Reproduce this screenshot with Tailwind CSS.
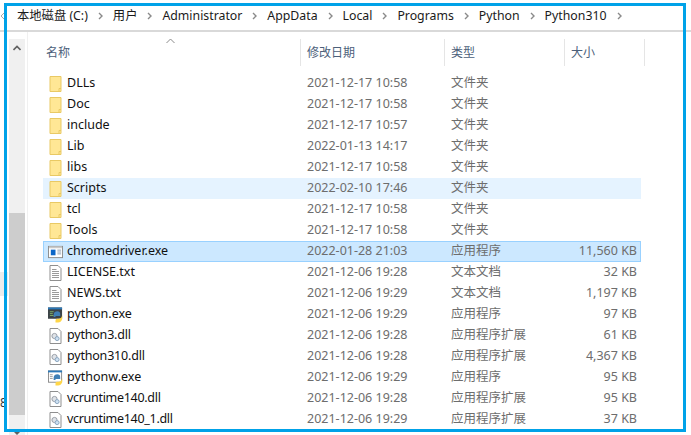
<!DOCTYPE html>
<html lang="zh-CN">
<head>
    <meta charset="UTF-8">
    <title>Python310</title>
    <script src="https://cdn.jsdelivr.net/npm/@tailwindcss/browser@4"></script>
</head>
<body class="bg-white">
    <svg width="0" height="0" class="absolute">
        <symbol id="folder" viewBox="0 0 14 16">
            <path d="M1.5 .5H12.5V15.5H1.5Z" fill="#ffe795" stroke="#e9c964"/>
            <path d="M10.5 15V12.5H12.5" fill="none" stroke="#e9c964"/>
        </symbol>
        <symbol id="txt" viewBox="0 0 14 16">
            <path d="M1.5 .5H9.5L12.5 3.5V15.5H1.5Z" fill="#fff" stroke="#8f8f8f"/>
            <path d="M3.5 4.5H8M3.5 6.5H10.5M3.5 8.5H10.5M3.5 10.5H10.5M3.5 12.5H10.5" stroke="#9a9a9a"/>
        </symbol>
        <symbol id="dll" viewBox="0 0 14 16">
            <path d="M1.5 .5H9.5L12.5 3.5V15.5H1.5Z" fill="#fff" stroke="#8f8f8f"/>
            <circle cx="6" cy="8" r="2.6" fill="#dfe3e8" stroke="#9aa0a8"/>
            <circle cx="8.6" cy="10.6" r="2" fill="#cfe2f3" stroke="#8ba6c0"/>
        </symbol>
        <symbol id="exe" viewBox="0 0 16 13">
            <rect x=".5" y=".5" width="15" height="12" fill="#fff" stroke="#8a8a8a"/>
            <path d="M1 1.5H15" stroke="#c9c9c9" stroke-width="2"/>
            <rect x="3" y="4" width="5" height="6" fill="#0a66c8"/>
            <path d="M10 4.5H14M10 6.5H14M10 8.5H14" stroke="#8a9cb0"/>
        </symbol>
        <symbol id="pyexe" viewBox="0 0 16 16">
            <rect width="15" height="12" fill="#3c4347"/>
            <rect width="15" height="2" fill="#2b78b8"/>
            <path d="M2 4.5H6M2 6.5H5M2 8.5H6" stroke="#7fb069"/>
            <path d="M6 8C6 5 8 4 10 4S13 5 13 7V9H8V10H6Z" fill="#3f7fb5"/>
            <path d="M15 8C15 11 13 12 11 12S8 12 8 14V16H11C14 16 16 13 15 8Z" fill="#ffd648"/>
        </symbol>
        <symbol id="pyw" viewBox="0 0 16 16">
            <rect x=".5" y=".5" width="14" height="12" fill="#fff" stroke="#8a8a8a"/>
            <rect width="15" height="2" fill="#2b78b8"/>
            <path d="M2 4.5H5M2 6.5H5M2 8.5H5" stroke="#9a9a9a"/>
            <path d="M6 8C6 5 8 4 10 4S13 5 13 7V9H8V10H6Z" fill="#3f7fb5"/>
            <path d="M15 8C15 11 13 12 11 12S8 12 8 14V16H11C14 16 16 13 15 8Z" fill="#ffd648"/>
        </symbol>
        <symbol id="chev" viewBox="0 0 5 8">
            <path d="M1 1L4 4L1 7" fill="none" stroke="#8a8a8a" stroke-width="1.4"/>
        </symbol>
    </svg>

    <div class="relative w-[691px] h-[435px] overflow-hidden bg-white text-[12.5px] font-['Noto_Sans','Noto_Sans_CJK_SC',sans-serif]">
        <!-- 地址栏 -->
        <div class="h-[32px] border-b-2 border-[#d9d9d9] flex items-center pl-[17px] pt-[2px] text-[#1a1a1a] text-[12.3px]">
            <span>本地磁盘 (C:)</span>
            <svg class="w-[5px] h-[8px] mx-[10px]"><use href="#chev"/></svg>
            <span>用户</span>
            <svg class="w-[5px] h-[8px] mx-[10px]"><use href="#chev"/></svg>
            <span>Administrator</span>
            <svg class="w-[5px] h-[8px] mx-[10px]"><use href="#chev"/></svg>
            <span>AppData</span>
            <svg class="w-[5px] h-[8px] mx-[10px]"><use href="#chev"/></svg>
            <span>Local</span>
            <svg class="w-[5px] h-[8px] mx-[10px]"><use href="#chev"/></svg>
            <span>Programs</span>
            <svg class="w-[5px] h-[8px] mx-[10px]"><use href="#chev"/></svg>
            <span>Python</span>
            <svg class="w-[5px] h-[8px] mx-[10px]"><use href="#chev"/></svg>
            <span>Python310</span>
            <svg class="w-[5px] h-[8px] mx-[10px]"><use href="#chev"/></svg>
        </div>

        <div class="flex h-[403px]">
            <!-- 左侧边 -->
            <div class="w-[9px] shrink-0"></div>
            <!-- 滚动条 -->
            <div class="w-[16px] shrink-0 bg-[#f0f0f0] flex flex-col mt-[7px] h-[396px]">
                <div class="h-[174px] flex justify-center pt-[6px]">
                    <svg width="8" height="6" viewBox="0 0 8 6"><path d="M.5 5L4 1.5L7.5 5" fill="none" stroke="#606060" stroke-width="1.6"/></svg>
                </div>
                <div class="h-[202px] bg-[#cdcdcd]"></div>
                <div class="flex justify-center pt-[17px]">
                    <svg width="8" height="3" viewBox="0 0 8 3"><path d="M1 0H7L4 3Z" fill="#606060"/></svg>
                </div>
            </div>
            <!-- 文件列表 -->
            <div class="ml-[2px] w-[614px] border-l border-[#f0f0f0] pl-[15px] pt-[7px] relative">
                <div class="flex h-[27px] items-center text-[#4c607a] text-[12px]">
                    <div class="w-[258px] shrink-0 pl-[3px] border-r border-[#e5e5e5] h-full flex items-center">名称</div>
                    <div class="w-[144px] shrink-0 pl-[6px] border-r border-[#e5e5e5] h-full flex items-center">修改日期</div>
                    <div class="w-[120px] shrink-0 pl-[6px] border-r border-[#e5e5e5] h-full flex items-center">类型</div>
                    <div class="w-[80px] shrink-0 pl-[6px] border-r border-[#e5e5e5] h-full flex items-center">大小</div>
                </div>
                <div id="rows" class="mt-[7px] w-[598px] text-[#6d6d6d]"></div>
            </div>
        </div>

        <!-- 排序箭头 -->
        <svg class="absolute left-[166px] top-[38px]" width="9" height="6" viewBox="0 0 9 6"><path d="M.5 5L4.5 1L8.5 5" fill="none" stroke="#8a8a8a"/></svg>
        <!-- 左边缘残留内容 -->
        <svg class="absolute left-[1px] top-[12px]" width="3" height="8" viewBox="0 0 3 8"><path d="M3 1L0 4L3 7" fill="none" stroke="#a8a8a8"/></svg>
        <div class="absolute left-0 top-[272px] w-[8px] h-[24px] bg-[#ececec]"></div>
        <span class="absolute left-0 top-[394px] text-[12px] text-[#333]">8</span>
        <!-- 蓝色标注框 -->
        <div class="absolute left-[4px] top-[3px] w-[682px] h-[429px] border-[3px] border-[#00a2e8]"></div>
    </div>

    <script>
        const files = [
            ['DLLs', '2021-12-17 10:58', '文件夹', '', 'folder'],
            ['Doc', '2021-12-17 10:58', '文件夹', '', 'folder'],
            ['include', '2021-12-17 10:57', '文件夹', '', 'folder'],
            ['Lib', '2022-01-13 14:17', '文件夹', '', 'folder'],
            ['libs', '2021-12-17 10:58', '文件夹', '', 'folder'],
            ['Scripts', '2022-02-10 17:46', '文件夹', '', 'folder', 'bg-[#e5f3ff]'],
            ['tcl', '2021-12-17 10:58', '文件夹', '', 'folder'],
            ['Tools', '2021-12-17 10:58', '文件夹', '', 'folder'],
            ['chromedriver.exe', '2022-01-28 21:03', '应用程序', '11,560 KB', 'exe', 'bg-[#cce8ff] outline outline-1 -outline-offset-1 outline-[#99d1ff]'],
            ['LICENSE.txt', '2021-12-06 19:28', '文本文档', '32 KB', 'txt'],
            ['NEWS.txt', '2021-12-06 19:29', '文本文档', '1,197 KB', 'txt'],
            ['python.exe', '2021-12-06 19:29', '应用程序', '97 KB', 'pyexe'],
            ['python3.dll', '2021-12-06 19:28', '应用程序扩展', '61 KB', 'dll', '', 'tracking-[-0.2px]'],
            ['python310.dll', '2021-12-06 19:28', '应用程序扩展', '4,367 KB', 'dll', '', 'tracking-[-0.2px]'],
            ['pythonw.exe', '2021-12-06 19:29', '应用程序', '95 KB', 'pyw'],
            ['vcruntime140.dll', '2021-12-06 19:28', '应用程序扩展', '95 KB', 'dll', '', 'tracking-[-0.3px]'],
            ['vcruntime140_1.dll', '2021-12-06 19:29', '应用程序扩展', '37 KB', 'dll', '', 'tracking-[-0.3px]'],
        ];

        document.getElementById('rows').innerHTML = files.map(f => `
            <div class="flex items-center h-[21px] ${f[5] || ''}">
                <div class="w-[24px] shrink-0 flex justify-center pl-[1px]">
                    <svg class="w-[15px] h-[16px]"><use href="#${f[4]}"/></svg>
                </div>
                <div class="w-[240px] shrink-0 text-[#111] ${f[6] || ''}">${f[0]}</div>
                <div class="w-[144px] shrink-0">${f[1]}</div>
                <div class="w-[100px] shrink-0">${f[2]}</div>
                <div class="w-[86px] shrink-0 text-right">${f[3]}</div>
            </div>`).join('');
    </script>
</body>
</html>
